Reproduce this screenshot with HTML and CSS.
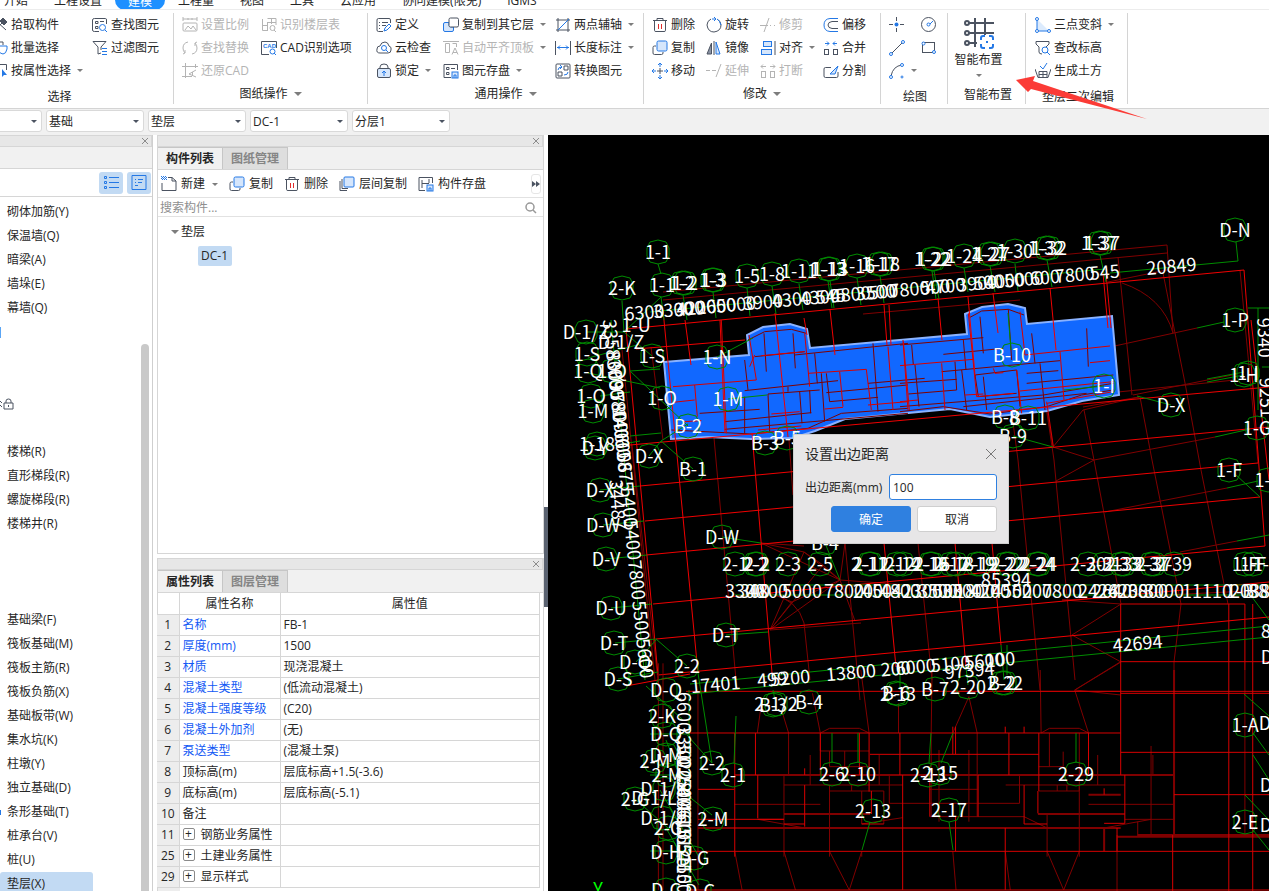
FILE: index.html
```html
<!DOCTYPE html>
<html lang="zh-CN">
<head>
<meta charset="utf-8">
<title>建模</title>
<link rel="stylesheet" href="styles.css">
</head>
<body>
<svg class="defs" aria-hidden="true">
  <symbol id="copy" viewBox="0 0 16 16"><path d="M4 6H2.500Q1 6 1 7.500V13Q1 14.500 2.500 14.500H9.500Q11 14.500 11 13V12"/><rect class="bf" x="5" y="1" width="10" height="10" rx="1.500"/></symbol>
  <symbol id="trash" viewBox="0 0 16 16"><path d="M1 3.500H15M5 3.500V1.500H11V3.500M2.500 4V13.500Q2.500 14.500 4 14.500H12Q13.500 14.500 13.500 13.500V4"/><path class="r" d="M6.500 7V12M9.500 7V12"/></symbol>
</svg>

<nav class="tabs">
  <button>开始</button><button>工程设置</button><button class="on">建模</button><button>工程量</button><button>视图</button><button>工具</button><button>云应用</button><button>协同建模(限免)</button><button>IGMS</button>
</nav>

<header class="ribbon">
  <section class="group g1">
    <div class="cols">
      <button><svg class="i" viewBox="0 0 16 16"><path d="M2 14L12 4M3 3L14 13"/><path class="s" d="M8 4L11 1L15 5L12 8Z"/></svg>拾取构件</button>
      <button><svg class="i" viewBox="0 0 16 16"><path d="M2 6H5V2H11V5"/><path class="b" d="M5 6H15V9Q14 14 11 14Q8 14 6 10Z"/></svg>批量选择</button>
      <button><svg class="i" viewBox="0 0 16 16"><path d="M1 1.500H14.500V7M1 5H8M2 9H6"/><path class="bs" d="M10 6L15 12H12L10 14Z"/></svg>按属性选择<i class="car"></i></button>
      <button><svg class="i" viewBox="0 0 16 16"><path d="M7 14.500H2.500Q.500 14.500 .500 13V3Q.500 1.500 2.500 1.500H13.500Q14.500 1.500 14.500 3V7M3.500 4.500H6V6.500H3.500ZM3.500 9.500H6V11.500H3.500ZM8 4.500H12"/><circle class="b" cx="10.500" cy="10.500" r="3"/><path class="b" d="M13 13L15 15"/></svg>查找图元</button>
      <button><svg class="i" viewBox="0 0 16 16"><path d="M1 1.500H14L9 7V10M1 1.500L6 7V14L9 13"/><path class="b" d="M10 8.500H15M10 11.500H15M10 14.500H15"/></svg>过滤图元</button>
    </div>
    <h2 class="plain">选择</h2>
  </section>
  <section class="group g2">
    <div class="cols">
      <button disabled><svg class="i" viewBox="0 0 16 16"><path d="M1 0V4M15 0V4M1 2H15M6 1V3M10 1V3M2 6H14Q15 6 15 7V13Q15 14 14 14H2Q1 14 1 13V7Q1 6 2 6M3 13L6 9L9 12L11 9L14 13"/></svg>设置比例</button>
      <button disabled><svg class="i" viewBox="0 0 16 16"><path d="M6 2Q1 3 1 8Q1 11 3 13L1 14M3 13V10M10 14Q15 13 15 8Q15 5 13 3L15 2M13 3V6"/></svg>查找替换</button>
      <button disabled><svg class="i" viewBox="0 0 16 16"><path d="M3.500 0V15M0 3.500H16M0 13.500H10M13.500 1V5M14 7L7 11L14 14M10.500 9V12"/></svg>还原CAD</button>
      <button disabled><svg class="i" viewBox="0 0 16 16"><path d="M1.500 2V13.500H6M1.500 8.500H6M6.500 5V14M6.500 1.500H15V8M10.500 1V7M6 5.500H15"/><circle cx="11.500" cy="11" r="2.500"/><path d="M13 13L15 15"/></svg>识别楼层表</button>
      <button><svg class="i" viewBox="0 0 16 16"><path d="M8 14.500H.500V1.500H15.500V8"/><text x="2" y="8" class="mini">CAD</text><circle class="b" cx="11.500" cy="11.500" r="2.500"/><path class="b" d="M13 13L15 15"/></svg>CAD识别选项</button>
    </div>
    <h2>图纸操作<i class="car big"></i></h2>
  </section>
  <section class="group g3">
    <div class="cols">
      <button><svg class="i" viewBox="0 0 16 16"><path d="M7 14.500H2.500Q1 14.500 1 13V3Q1 1.500 2.500 1.500H13Q14.500 1.500 14.500 3V6M3 5.500H4M6 5.500H12M3 8.500H4M6 8.500H10M3 11.500H4"/><path class="b" d="M8 14L9 11L13 7L15 9L11 13Z"/></svg>定义</button>
      <button><svg class="i" viewBox="0 0 16 16"><path d="M4 13Q0 13 1 9Q1 6 4 6Q5 2 9 2Q12 2 13 6Q16 7 15 10Q15 13 12 13Z"/><circle class="b" cx="8" cy="8" r="2.500"/><path class="b" d="M10 10L12 12"/></svg>云检查</button>
      <button><svg class="i" viewBox="0 0 16 16"><path d="M4 6V4Q4 1 8 1Q12 1 12 4V6"/><rect class="lf" x="1.500" y="5.500" width="13" height="9" rx="1.500"/><path class="b" d="M8 13V9M6 10L8 8L10 10"/></svg>锁定<i class="car"></i></button>
      <button><svg class="i" viewBox="0 0 16 16"><path class="bf" d="M6 5.500H2Q.500 5.500 .500 7V13Q.500 14.500 2 14.500H9Q10.500 14.500 10.500 13V10H8Q6 10 6 8Z"/><rect x="6" y="1" width="9.500" height="9" rx="1.500" fill="#fff"/></svg>复制到其它层<i class="car"></i></button>
      <button disabled><svg class="i" viewBox="0 0 16 16"><path d="M0 1.500H16M2.500 3.500H6.500V12.500H2.500ZM9.500 3.500H13.500V7M9 14.500L12 8L15 14.500M10 12.500H14"/></svg>自动平齐顶板<i class="car"></i></button>
      <button><svg class="i" viewBox="0 0 16 16"><path d="M8 14.500H1V1.500H14.500V7M3.500 4.500H6V6.500H3.500ZM3.500 9.500H6V11.500H3.500ZM8 5.500H12"/><rect class="bf" x="9" y="9" width="6" height="6"/><path class="b" d="M11 15V12H13V15"/></svg>图元存盘<i class="car"></i></button>
      <button><svg class="i" viewBox="0 0 16 16"><path d="M3 1V15M13 1V15M1 3H15M1 13H15"/><path class="b" d="M3 13L14 2"/></svg>两点辅轴<i class="car"></i></button>
      <button><svg class="i" viewBox="0 0 16 16"><path d="M.500 1V15M15.500 1V15"/><path class="b" d="M2 7.500H14M5 5.500L3 7.500L5 9.500M11 5.500L13 7.500L11 9.500"/></svg>长度标注<i class="car"></i></button>
      <button><svg class="i" viewBox="0 0 16 16"><rect x="1" y="1" width="14" height="14" rx="1"/><path d="M9 3H13V7H9ZM3 9H7V13H3Z"/><path class="b" d="M3 7Q3 4 7 4M13 9Q13 12 9 12M5 2L7 4L5 6"/></svg>转换图元</button>
    </div>
    <h2>通用操作<i class="car big"></i></h2>
  </section>
  <section class="group g4">
    <div class="cols">
      <button><svg class="i"><use href="#trash"/></svg>删除</button>
      <button><svg class="i"><use href="#copy"/></svg>复制</button>
      <button><svg class="i" viewBox="0 0 16 16"><path d="M5 8H11M8 5V11"/><path class="b" d="M8 0V4M8 12V16M0 8H4M12 8H16M6 2L8 0L10 2M6 14L8 16L10 14M2 6L0 8L2 10M14 6L16 8L14 10"/></svg>移动</button>
      <button><svg class="i" viewBox="0 0 16 16"><path d="M5 2Q1 4 1 8Q2 15 8 15Q15 14 15 8Q15 4 11 2"/><path class="b" d="M6 2H10M8 0L10 2L8 4M11 2Q14 4 15 8"/></svg>旋转</button>
      <button><svg class="i" viewBox="0 0 16 16"><path d="M5.500 3V14H1Z" fill="#8b93a3"/><path d="M8 1V15"/><path class="bf" d="M10 2L14 14H10Z"/></svg>镜像</button>
      <button disabled><svg class="i" viewBox="0 0 16 16"><path d="M0 7.500H4M6 7.500H10M10 14L15 1"/></svg>延伸</button>
      <button disabled><svg class="i" viewBox="0 0 16 16"><path d="M0 8.500H8M10 8.500H11M14 8.500H15M4 15L9 1"/></svg>修剪</button>
      <button><svg class="i" viewBox="0 0 16 16"><path d="M15 1V15"/><rect class="bf" x="3.500" y="1.500" width="8" height="5"/><rect class="bf" x="1.500" y="9.500" width="10" height="5"/></svg>对齐<i class="car"></i></button>
      <button disabled><svg class="i" viewBox="0 0 16 16"><rect x="1.500" y="8.500" width="4" height="6"/><rect x="10.500" y="8.500" width="4" height="6"/><path d="M6 3.500H1M3 1.500L1 3.500L3 5.500M10 3.500H15M13 1.500L15 3.500L13 5.500"/></svg>打断</button>
      <button><svg class="i" viewBox="0 0 16 16"><path class="b" d="M15 1.500H7Q1 2 1 8Q1 14 7 14.500H15"/><path d="M15 4.500H9Q5 5 5 8Q5 11 9 11.500H15"/></svg>偏移</button>
      <button><svg class="i" viewBox="0 0 16 16"><rect x="1.500" y="9.500" width="4" height="5"/><rect x="10.500" y="9.500" width="4" height="5"/><path class="b" d="M2 3.500H6M4 1.500L6 3.500L4 5.500M14 3.500H10M12 1.500L10 3.500L12 5.500"/></svg>合并</button>
      <button><svg class="i" viewBox="0 0 16 16"><path d="M8 4.500H2.500Q1 4.500 1 6V13Q1 14.500 2.500 14.500H13.500Q15 14.500 15 13V9"/><path class="bf" d="M7 11L15 3L12 11Z"/></svg>分割</button>
    </div>
    <h2>修改<i class="car big"></i></h2>
  </section>
  <section class="group g5">
    <div class="cols">
      <button aria-label="点"><svg class="i" viewBox="0 0 16 16"><path d="M0 7.500H4M11 7.500H15M7.500 0V4M7.500 11V15"/><circle class="bs" cx="7.500" cy="7.500" r="2"/></svg></button>
      <button aria-label="直线"><svg class="i" viewBox="0 0 16 16"><path d="M3 13L13 3"/><circle class="bw" cx="2" cy="14" r="1.500"/><circle class="bw" cx="14" cy="2" r="1.500"/></svg></button>
      <button aria-label="弧"><svg class="i" viewBox="0 0 16 16"><path d="M2 13Q4 3 13 2"/><circle class="bw" cx="2" cy="14" r="1.500"/><circle class="bw" cx="13" cy="2" r="1.500"/><circle class="bw" cx="13" cy="14" r="1"/></svg><i class="car"></i></button>
      <button aria-label="圆"><svg class="i" viewBox="0 0 16 16"><circle cx="7.500" cy="7.500" r="7"/><path class="b" d="M8 8L12 4"/><circle class="bw" cx="7.500" cy="7.500" r="1.500"/></svg></button>
      <button aria-label="矩形"><svg class="i" viewBox="0 0 16 16"><rect x="1.500" y="2.500" width="12" height="10"/><circle class="bw" cx="2.500" cy="3.500" r="1.500"/><circle class="bw" cx="13" cy="12" r="1.500"/></svg></button>
    </div>
    <h2 class="plain">绘图</h2>
  </section>
  <section class="group g6">
    <button class="large"><svg viewBox="0 0 32 32"><path d="M5 6H31M5 16H31M5 26H14M12 1V30M22 1V18"/><circle cx="4" cy="6" r="2"/><circle cx="4" cy="16" r="2"/><circle cx="4" cy="26" r="2"/><path class="b" d="M22 19H20Q18 19 18 21V23M26 19H28Q30 19 30 21V23M18 27V29Q18 31 20 31H22M30 27V29Q30 31 28 31H26M23 25H25"/></svg>智能布置<i class="car"></i></button>
    <h2 class="plain">智能布置</h2>
  </section>
  <section class="group g7">
    <div class="cols">
      <button><svg class="i" viewBox="0 0 16 16"><path fill="#dcebfd" stroke="none" d="M2 2L14 14H2Z"/><path class="b" d="M2 2V14H15"/><circle class="bw" cx="2" cy="2" r="1.500"/><circle class="bw" cx="2" cy="14" r="1.500"/><circle class="bw" cx="14" cy="14" r="1.500"/></svg>三点变斜<i class="car"></i></button>
      <button><svg class="i" viewBox="0 0 16 16"><path d="M1 1.500H14V4L11 7M1 1.500V4L4 7V12Q4 14 7 14"/><circle class="b" cx="10" cy="10" r="3"/><path class="b" d="M12 12L15 15"/></svg>查改标高</button>
      <button><svg class="i" viewBox="0 0 16 16"><path d="M0 6L3 14.500H13L16 6M4 8.500H12V14M4 8.500V14M8 8.500V15M4 11.500H12"/><path class="b" d="M5 3L8 6L12 0"/></svg>生成土方</button>
    </div>
    <h2 class="plain">垫层二次编辑</h2>
  </section>
  <svg class="pointer" viewBox="0 0 132 44" aria-hidden="true"><path d="M0 4L19 0L17 5L131 43L15 13L12 16Z"/></svg>
</header>

<div class="filters">
  <label><select aria-label="楼层"><option></option></select></label>
  <label><select aria-label="类别"><option>基础</option></select></label>
  <label><select aria-label="构件类型"><option>垫层</option></select></label>
  <label><select aria-label="构件"><option>DC-1</option></select></label>
  <label><select aria-label="分层"><option>分层1</option></select></label>
</div>

<main>
  <aside class="nav">
    <div class="strip"><button aria-label="关闭"><svg viewBox="0 0 8 8"><path d="M1 1L7 7M7 1L1 7"/></svg></button></div>
    <div class="blank"></div>
    <div class="views">
      <button aria-label="列表"><svg class="i" viewBox="0 0 16 16"><path class="b" d="M6 2.500H16M6 7.500H16M6 12.500H16M1.500 1.500H3.500V3.500H1.500ZM1.500 6.500H3.500V8.500H1.500ZM1.500 11.500H3.500V13.500H1.500Z"/></svg></button>
      <button aria-label="详情"><svg class="i" viewBox="0 0 16 16"><path class="b" d="M1 .500H15V14.500H1ZM4 4.500H5M7 4.500H12M4 7.500H5M7 7.500H11M4 10.500H7"/></svg></button>
    </div>
    <ul>
      <li>砌体加筋(Y)</li><li>保温墙(Q)</li><li>暗梁(A)</li><li>墙垛(E)</li><li>幕墙(Q)</li><li class="mark"></li><li></li><li></li>
      <li class="lock"><svg viewBox="0 0 14 12"><path d="M0 3L2 5M0 7L2 9M4 5H13V11H4ZM6 5V3Q6 1 8.500 1Q11 1 11 3V5M8.500 7V9"/></svg></li><li></li>
      <li>楼梯(R)</li><li>直形梯段(R)</li><li>螺旋梯段(R)</li><li>楼梯井(R)</li><li></li><li></li><li></li>
      <li>基础梁(F)</li><li>筏板基础(M)</li><li>筏板主筋(R)</li><li>筏板负筋(X)</li><li>基础板带(W)</li><li>集水坑(K)</li><li>柱墩(Y)</li><li>独立基础(D)</li><li class="dot">条形基础(T)</li><li>桩承台(V)</li><li>桩(U)</li><li class="on">垫层(X)</li>
    </ul>
    <div class="thumb"></div>
  </aside>

  <div class="mid">
    <section class="panel comps">
      <div class="strip"><button aria-label="关闭"><svg viewBox="0 0 8 8"><path d="M1 1L7 7M7 1L1 7"/></svg></button></div>
      <div class="ptabs"><button class="on">构件列表</button><button>图纸管理</button></div>
      <div class="tools">
        <button><svg class="i" viewBox="0 0 16 16"><path d="M7 1.500H11L15 5V14.500H1V7M11 1.500V5H15"/><path class="b" stroke-dasharray="1 1" d="M0 .500H5M1 1.500H6M0 2.500H5M1 3.500H6"/></svg>新建<i class="car"></i></button>
        <button><svg class="i"><use href="#copy"/></svg>复制</button>
        <button><svg class="i"><use href="#trash"/></svg>删除</button>
        <button><svg class="i" viewBox="0 0 16 16"><path d="M1 5V14.500H8M3 3V12.500H9"/><rect class="bf" x="5" y="1" width="10" height="10" rx="1"/></svg>层间复制</button>
        <button><svg class="i" viewBox="0 0 16 16"><path d="M7 14.500H1V1.500H14.500V7M4 4V12M4 7.500H11M11 3V7"/><rect class="bf" x="9" y="9" width="6" height="6"/><path class="b" d="M11 15V12H13V15"/></svg>构件存盘</button>
        <button class="more" aria-label="更多"><svg viewBox="0 0 8 6"><path d="M0 0L4 3L0 6ZM4 0L8 3L4 6Z"/></svg></button>
      </div>
      <label class="search"><input type="text" placeholder="搜索构件..." aria-label="搜索构件"><svg viewBox="0 0 12 12"><circle cx="5" cy="5" r="4"/><path d="M8 8L11 11"/></svg></label>
      <div class="tree">
        <p><i class="car big"></i>垫层</p>
        <p class="leaf"><span>DC-1</span></p>
      </div>
    </section>
    <section class="panel props">
      <div class="strip"><button aria-label="关闭"><svg viewBox="0 0 8 8"><path d="M1 1L7 7M7 1L1 7"/></svg></button></div>
      <div class="ptabs"><button class="on">属性列表</button><button>图层管理</button></div>
      <table>
        <thead><tr><th></th><th>属性名称</th><th>属性值</th></tr></thead>
        <tbody>
          <tr><th>1</th><td class="key">名称</td><td>FB-1</td></tr>
          <tr><th>2</th><td class="key">厚度(mm)</td><td>1500</td></tr>
          <tr><th>3</th><td class="key">材质</td><td>现浇混凝土</td></tr>
          <tr><th>4</th><td class="key">混凝土类型</td><td>(低流动混凝土)</td></tr>
          <tr><th>5</th><td class="key">混凝土强度等级</td><td>(C20)</td></tr>
          <tr><th>6</th><td class="key">混凝土外加剂</td><td>(无)</td></tr>
          <tr><th>7</th><td class="key">泵送类型</td><td>(混凝土泵)</td></tr>
          <tr><th>8</th><td>顶标高(m)</td><td>层底标高+1.5(-3.6)</td></tr>
          <tr><th>9</th><td>底标高(m)</td><td>层底标高(-5.1)</td></tr>
          <tr><th>10</th><td>备注</td><td></td></tr>
          <tr><th>11</th><td><button class="plus" aria-label="展开">+</button>钢筋业务属性</td><td></td></tr>
          <tr><th>25</th><td><button class="plus" aria-label="展开">+</button>土建业务属性</td><td></td></tr>
          <tr><th>29</th><td><button class="plus" aria-label="展开">+</button>显示样式</td><td></td></tr>
        </tbody>
      </table>
      <div class="tail"></div>
    </section>
  </div>

  <div class="splitter"><button aria-label="折叠"></button></div>

  <section class="canvas">
    <svg class="plan" viewBox="548 135 721 756" preserveAspectRatio="xMinYMin slice">
      <!-- dark axes -->
      <g class="dark">
        <path d="M663 292L1167 245L1173 333M663 300L1167 253M651 347L663 440M622 350L655 680M632 445L659 690M714 438L736 680M789 440L793 495M845 543L860 700M918 543L932 680M1010 400L1018 460L1040 690M1045 400L1054 460L1075 680M1140 397L1152 460L1181 604L1174 662V776M1084 410L1094 460L1121 604M1118 257L1132 395M1163 273L1185 383L1201 470L1228 604M1240 270L1258 463M863 314L1020 300M1122 283Q1163 297 1173 333M1108 282L1167 270M1110 347L1197 328M1133 395L1237 374M1118 392L1235 380M1083 407L1139 397M1053 447L1083 410L1139 397M1053 447L1094 460L1215 437M1094 460L1056 481M1105 512L1227 488M1180 552L1237 541M1047 411L1053 447"/>
        <path d="M761 543L804 552L840 580L855 621M770 630L804 552M770 630L823 565L804 552M770 630L840 580L823 565M770 630L792 602L840 580M770 630L861 623M770 593Q798 600 804 623L810 680M761 543L840 580M840 580L845 543M761 543L804 546M840 580L908 585M792 602L770 593"/>
        <path d="M1121 604L1072 635L1121 662M1121 604L1062 600M1121 662L1075 690M1062 600L1269 590"/>
      </g>
      <!-- selected raft slab -->
      <path class="slab" d="M664 362L749 355L747 335L763 327L790 324L807 329L810 348L967 334L965 314L982 307L1008 304L1025 308L1027 324L1112 316L1119 395L1082 401L1047 411L990 417L950 409L845 419L815 431L793 438L751 439L708 437L671 439Z"/>
      <g class="dark" transform="translate(548 210) scale(.33333)" stroke-width="3">
        <path d="M600 390L650 365L730 358L775 370M648 370L655 485M735 370L742 475M590 450L600 540M620 440L770 425M740 435L980 410L1080 400M800 430L808 520M975 400L990 605M590 542L870 512M590 560V670M660 552L815 540M720 530V545M755 545L762 640M785 540L788 610M530 635L790 608M530 658L1080 610M455 610L635 598M820 490L830 635M835 490L845 575L990 562M835 548L1080 525M960 520L1130 505M370 660L610 672L780 655L880 610L1080 595M660 552L665 665"/>
      </g>
      <g class="dark" transform="translate(900 210) scale(.33333)" stroke-width="3">
        <path d="M210 322L245 303L325 298L372 315M240 320L250 430M325 298L335 450M0 405L250 383M35 405L40 465M190 390L198 480M130 433L310 415M45 465L57 590M125 485L480 452M165 455L170 540L25 552M185 480L200 600M0 520L170 508M250 500L260 600M225 495L350 480L360 590M225 495L235 560L350 550M395 370L405 460M380 490L475 482M380 520L640 495M420 460L435 600M560 355L565 470M0 590L430 555L640 520M0 605L130 590L270 612L440 590L545 555L640 540M190 590L560 550"/>
      </g>
      <!-- main axes -->
      <g class="red">
        <path d="M626 329L1244 270L1265 546M636 349L745 340M630 445L1269 387M640 486L1269 427M645 521L1258 463M646 555L1260 497M653 604L1265 546M656 639L1269 582M658 675L1269 617M626 329L658 675M663 310L698 673M685 320L691 365M720 320L725 433M752 433L772 673M775 313L788 437M804 318L807 335M830 310L835 355M884 305L887 345M889 305L891 345M938 298L942 340M968 297L975 375M993 293L998 333M1050 288L1056 350M1103 273L1108 328M1106 273L1111 328M884 543L896 667M955 543L966 667M992 543L1001 645M1251 320L1269 480M626 686L690 674"/>
      </g>
      <g class="mid-red" transform="translate(548 210) scale(.33333)">
        <path d="M375 530L625 510L603 375M375 577L440 570M440 525L448 620M520 330L535 670M640 437L770 425M605 470L620 435M670 612L755 605M780 490L955 478L970 600M875 485L885 590M830 597L885 592M1020 410L1035 600M1065 390L1080 600M960 585L1080 575M630 660L760 648M770 370L785 530M410 635L460 632"/>
      </g>
      <g class="mid-red" transform="translate(900 210) scale(.33333)">
        <path d="M0 467L220 448M205 310L230 560L340 550M360 305L375 435L630 408M480 425L492 570M360 543L640 515M570 458L630 452M195 555L250 552M0 575L55 570M10 395L28 600M125 460L135 600M440 580L640 545M350 480L365 610M280 475L285 490L310 488M440 575L460 710"/>
      </g>
      <!-- lower block; drawn in its own wider grid -->
      <g class="lower dark" transform="translate(548 670) scale(.46 .33333)">
        <path d="M240 -20V660M250 -20V660M326 70V660M463 110L455 189M510 130L523 189V315M575 70L592 189L612 175H677L698 189L680 0M762 100V189M835 0L833 189V440M915 80L880 189M915 80L933 189V440M1070 0L1072 189L1090 175H1155L1175 189L1145 60L1245 75M1145 60L1245 -25M592 189V243H698M612 243V290H698M645 243V290M570 255V345M720 255V345M742 315V400H1025V315M771 443L682 462M513 345H771M995 345H1254M513 315V560M612 345V560M1155 345V560M1085 430V560M405 403H592M612 363H730V462M682 363V462M830 358H935M830 440H1035L1085 474M456 448L558 474M1209 474L1311 448M406 544L422 660M513 544L538 660M612 544L655 660L682 544V560M880 544L887 660M994 544L1005 660M1085 544L1121 660L1155 544M1120 245V290H1067M1175 403H1361M660 345V363M1107 345V363M1128 345V363M850 240V455M915 240V455M1090 189V290M1155 189V363H1067M1195 255V345M1254 448H1361M1282 455V500M1311 228V495M1315 255V315M1361 60V495M880 64H1245M1237 495V663M1515 0V495"/>
        <path class="thick" d="M405 315H1361M326 474H1245M1237 500H1568M1282 495H1568M513 432H700M1065 432H1254M1175 374H1245M1209 474V544M1361 0V495"/>
      </g>
      <g class="lower mid-red" transform="translate(548 670) scale(.46 .33333)">
        <path d="M300 64H1568M1245 70H1568M300 189H1245M1245 247H1568M700 253H1067M326 358H405M326 448H513M300 544H1568M300 660H1568M406 189V560M451 189V315M456 315V445M592 189V315M677 189V315M698 189V365M765 189V315M880 170V253M886 170V253M886 440V544M994 170V189M1035 170V189M1002 189V315M1067 189V363M1175 189V315M1245 -198V315M1245 -198H1515V0M1480 -198V663M1532 -198V663M1245 -25H1568M1361 374H1568M558 345V470M558 295V315M703 363V432M771 315V660M830 315V440M935 315V440M994 474V660M1035 345V462H1085M1065 363V430M1254 315V460H1209M682 462H730M513 462H558M1358 495V663M1237 474V544M456 448H513M1209 355V374"/>
      </g>
      <!-- leaders -->
      <g class="green">
        <path d="M658 264L661 274M661 297L664 320M683 295L687 320M713 292L716 318M747 288L750 316M772 286L776 314M799 284L803 310M828 281L832 308M830 281L834 308M857 278L861 305M880 276L884 303M932 271L936 299M934 271L939 299M964 268L968 292M990 266L995 292M1015 264L1018 291M1047 260L1052 287M1100 255L1106 282M1110 273L1238 261L1236 242M650 312L1105 269M622 301L624 332M661 297L624 332L652 356M637 345L588 358M624 332L587 332M660 388L588 373M630 371L660 369M630 371L688 426M649 456L661 441L688 424M661 441L693 469M630 436L661 433M600 396L630 392M600 448L640 441M717 357L753 338M728 399L767 395M1011 350L1008 313M1104 386L1064 390M1171 405L1137 396M1053 447L1013 436M1197 328L1224 322M1207 382L1244 375M1207 379L1244 372M1248 308H1269M1258 308V410M1262 367H1269M1215 437L1250 429M1236 475L1260 497M1227 488L1258 481M1237 541L1269 535M600 490L640 486M603 525L644 521M606 559L647 555M611 608L652 604M615 643L656 639L687 666M722 537L761 543M726 635L768 632M825 543L840 580M611 320L645 680M618 679L658 672M636 662L656 640M735 585H1269M735 595H1269M690 684L1269 626M690 694L1269 637M1252 597L1269 620M698 673L712 763M646 686L683 720M775 700L773 690M1007 645V675M900 670V690M1001 645L1004 680M966 667L968 685"/>
        <path d="M832 733V763M858 733V763M931 733L929 763M953 733L941 763M1076 733V763M736 716L734 763M870 822L862 850M949 822L953 850M1244 694L1269 716M1253 733L1269 755M1253 755L1269 780M1245 795L1269 820M1253 830L1269 850M687 735L712 763M687 795L712 815M660 790L699 857M635 799L668 828M666 740L690 800M689 690V891M666 828L699 885M650 734H690M650 775H690M650 851H690"/>
      </g>
      <g class="green" id="bubbles"></g>
      <g class="lab" id="names"></g>
      <g class="lab" id="dims"></g>
      <text class="lab axis" x="598" y="896">Y</text>
    </svg>

    <form class="dialog" role="dialog" aria-labelledby="dt">
      <div class="dhead"><h3 id="dt">设置出边距离</h3><button type="button" aria-label="关闭"><svg viewBox="0 0 12 12"><path d="M1 1L11 11M11 1L1 11"/></svg></button></div>
      <div class="field"><label for="dist">出边距离(mm)</label><input id="dist" type="text" value="100"></div>
      <div class="acts"><button type="button" class="ok">确定</button><button type="button">取消</button></div>
    </form>
  </section>
</main>
<script src="plan.js"></script>
</body>
</html>
```
FILE: plan.js
```js
// Axis names as "x y name"; a leading "~" marks a name without a bubble.
const names = `1235 230 D-N;658 252 1-1;622 288 2-K;662 285 1-1;682 283 1-2;685 283 1-2;712 280 1-3;714 280 1-3;747 276 1-5;772 274 1-8;799 271 1-11;828 269 1-13;830 269 1-13;857 266 1-16;879 264 1-17;882 264 1-18;932 259 1-22;934 259 1-22;964 256 1-24;989 254 1-27;992 254 1-27;1015 251 1-30;1046 248 1-32;1049 248 1-32;1099 243 1-37;1102 243 1-37;
586 332 D-1/Z;~636 325 1-U;~621 342 D-1/Z;587 354 1-S;652 356 1-S;588 371 1-Q;612 371 1-Q;591 396 1-O;593 411 1-M;717 357 1-N;728 399 1-M;662 398 1-O;688 426 B-2;765 443 B-3;787 438 B-5;1012 355 B-10;1104 386 1-I;1005 417 B-8;1028 418 B-11;1013 436 B-9;1171 405 D-X;1235 320 1-P;1244 375 1-H;1248 373 1-I;1257 428 1-G;1229 470 1-F;1268 480 1-E;
649 456 D-X;595 448 D-Y;597 444 1-18;693 469 B-1;600 490 D-X;603 525 D-W;722 537 D-W;606 559 D-V;611 608 D-U;614 643 D-T;726 635 D-T;635 662 D-Q;618 679 D-S;687 666 2-2;825 543 B-4;
735 564 2-1;755 564 2-2;757 564 2-2;788 564 2-3;820 564 2-5;869 564 2-11;871 564 2-11;897 564 2-12;903 564 2-14;930 564 2-16;932 564 2-16;951 564 2-17;956 564 2-18;977 564 2-19;980 564 2-19;1006 564 2-22;1009 564 2-22;1037 564 2-24;1039 564 2-24;1088 564 2-30;1104 564 2-31;1121 564 2-33;1124 564 2-33;1151 564 2-37;1154 564 2-37;1174 564 2-39;1245 564 1-F;1253 564 1-F;~1267 564 1-D;
666 690 D-Q;662 716 2-K;666 734 D-Q;666 755 D-M;655 761 2-M;667 775 2-M;664 789 D-1/K;635 799 2-G;~654 798 D-1/L;662 818 D-1/J;668 828 2-G;666 852 D-H;694 858 D-G;666 890 D-C;700 891 D-C;712 763 2-2;733 775 2-1;713 819 2-M;776 704 2-1/2;773 705 B-3;809 702 B-4;898 694 2-13;896 693 B-6;935 689 B-7;968 687 2-20;1005 683 2-22;1002 683 B-2;832 774 2-6;858 774 2-10;928 775 2-13;940 773 2-15;1076 774 2-29;873 811 2-13;949 810 2-17;1245 725 1-A;1245 822 2-E;~1265 723 D;~1266 785 D;~1266 825 D;~1266 631 8;~1267 657 D`;

// Runs of dimensions: origin, angle, then "offset value" pairs along the run.
const runs = [
  [645, 319, -5, "0 6300,29 3300,45 300,52 4200,72 2600,92 5000,119 3900,148 4300,176 4300,187 545,207 4800,232 3500,240 500,266 7800,292 500,302 4700,334 3900,345 500,362 4000,381 5000,402 600,432 7800,462 545,529 20849"],
  [603, 322, 84, "18 3358,50 8009,58 3000,80 3580,92 7800,108 1400,118 4060,132 6006,151 5875,187 5400,220 5400,260 7800,301 5500,339 5600"],
  [611, 505, 86, "0 34487"],
  [677, 712, 90, "0 6600,33 3350,48 3020,66 0250,80 2804,95 4061,108 0610,122 6065,136 5125,152 5150,172 1500"],
  [1258, 338, 88, "0 9340,60 9251"],
  [0, 598, 0, "745 3300,755 300,768 4800,802 5000,844 7800,868 200,882 4504,900 4800,922 2300,938 3500,948 500,962 3300,975 1800,990 4200,1012 4500,1032 5200,1062 7800,1098 2426,1112 2640,1128 4200,1148 3800,1164 3000,1207 11110,1240 1-B,1250 2038,1268 8885"],
  [1006, 587, 0, "0 85394"],
  [716, 691, -5, "0 17401,57 499,75 5200,136 13800,181 200,201 6000,236 5100,270 5600,286 100"],
  [970, 677, -5, "0 97394"],
  [1138, 650, -5, "0 42694"]
];

const ns = "http://www.w3.org/2000/svg";
function add(parent, tag, attrs, text) {
  const el = document.createElementNS(ns, tag);
  for (const k in attrs) el.setAttribute(k, attrs[k]);
  if (text) el.textContent = text;
  parent.appendChild(el);
  return el;
}

const bubbles = document.getElementById("bubbles");
const labels = document.getElementById("names");
const dims = document.getElementById("dims");

for (const item of names.split(";")) {
  const [x, y, name] = item.trim().replace("~", "").split(" ");
  if (!item.trim().startsWith("~")) {
    add(bubbles, "path", { d: `M${x} ${y}m0-12l8 2l3 6v8l-3 6l-8 2l-8-2l-3-6v-8l3-6z` });
  }
  add(labels, "text", { x, y: +y + 7 }, name);
}

for (const [x, y, angle, items] of runs) {
  const run = add(dims, "g", { transform: `translate(${x} ${y}) rotate(${angle})` });
  for (const pair of items.split(",")) {
    const [offset, value] = pair.split(" ");
    add(run, "text", { x: offset }, value);
  }
}
```
FILE: styles.css
```css
* { box-sizing: border-box; }
body {
  margin: 0; height: 100vh; overflow: hidden;
  display: flex; flex-direction: column;
  font: 12px/18px "Open Sans", "Noto Sans CJK SC", sans-serif;
  color: #262626; background: #fff;
}
button, input, select { font: inherit; color: inherit; border: 0; background: none; padding: 0; margin: 0; border-radius: 0; }
button { white-space: nowrap; }
h2, h3, p, ul { margin: 0; padding: 0; font: inherit; list-style: none; }
.defs { position: absolute; width: 0; height: 0; }

.i { width: 16px; height: 16px; flex: none; fill: none; stroke: #4b5361; }
.b { stroke: #2478e5; }
.r { stroke: #e02c2c; }
.s { fill: #4b5361; }
.bf { stroke: #2478e5; fill: #d6e6fb; }
.lf { fill: #d6e6fb; }
.bs { stroke: none; fill: #2478e5; }
.bw { stroke: #2478e5; fill: #fff; }
.mini { font: bold 6px "Liberation Sans", sans-serif; fill: #2478e5; stroke: none; }
.car { flex: none; border: 3px solid transparent; border-top-color: #7d7d7d; border-bottom: 0; margin-left: 3px; }
.car.big { border-width: 4px; border-bottom: 0; margin-left: 6px; }

.tabs { height: 10px; flex: none; display: flex; align-items: flex-end; margin-left: -9px; overflow: hidden; border-bottom: 1px solid #ececec; }
.tabs button { flex: none; height: 20px; padding: 3px 13px 0; line-height: 17px; }
.tabs .on { background: #1e90ff; color: #fff; border-radius: 10px; margin-bottom: -1px; }

.ribbon { position: relative; flex: none; display: flex; height: 99px; padding: 3px 0 4px; border-bottom: 1px solid #d4d4d4; }
.group { display: flex; flex-direction: column; border-right: 1px solid #d4d4d4; flex: none; }
.cols { display: grid; grid-auto-flow: column; grid-template-rows: repeat(3, 23px); justify-content: start; }
.cols button { display: flex; align-items: center; gap: 3px; }
.cols button:disabled { color: #b4b4b4; }
.cols button:disabled .i { stroke: #b4b4b4; }
.group h2 { flex: 1; display: flex; align-items: center; justify-content: center; padding-top: 2px; }
.group h2.plain { padding-top: 6px; }
.g1 { width: 174px; }
.g1 .cols { grid-template-columns: 100px auto; margin-left: -8px; }
.group.g1 h2 { padding-right: 54px; }
.g2 { width: 194px; padding-left: 8px; }
.g2 .cols { grid-template-columns: 79px auto; }
.g2 h2 { padding-right: 8px; }
.g3 { width: 276px; padding-left: 8px; }
.g3 .cols { grid-template-columns: 67px 112px auto; }
.g3 h2 { padding-right: 8px; }
.g4 { width: 237px; padding-left: 8px; }
.g4 .cols { grid-template-columns: 54px 54px 63px auto; }
.g4 h2 { padding-right: 8px; }
.g5 { width: 67px; padding-left: 8px; }
.g5 .cols { grid-template-columns: 32px auto; }
.g5 h2 { padding-right: 6px; }
.g6 { width: 78px; }
.g7 { width: 102px; padding-left: 9px; }
.g7 h2 { padding-right: 6px; }
.large { display: flex; flex-direction: column; align-items: center; height: 69px; padding: 4px 16px 0 0; }
.large svg { width: 32px; height: 32px; flex: none; fill: none; stroke: #4b5361; stroke-width: 2; margin-bottom: 2px; }
.large .car { margin: 5px 0 0; }
.g6 h2 { padding-left: 3px; }
.pointer { position: absolute; left: 1016px; top: 66px; width: 132px; height: 44px; fill: #fb3b36; }

.filters { flex: none; display: flex; gap: 4px; height: 26px; padding: 1px 0 3px; margin-left: -56px; background: #f1f1f1; }
.filters label { position: relative; flex: none; width: 98px; }
.filters select { appearance: none; width: 100%; height: 22px; padding: 1px 2px 0; background: #fff; border: 1px solid #d9d9d9; border-radius: 3px; }
.filters label::after { content: ""; position: absolute; right: 5px; top: 10px; border: 3px solid transparent; border-top-color: #4b5361; border-bottom: 0; }

main { flex: 1; min-height: 0; display: flex; }
.strip { flex: none; height: 12px; background: #e7e7e7; border: 1px solid #d6d6d6; border-left: 0; display: flex; justify-content: flex-end; align-items: center; padding-right: 2px; }
.strip button { display: flex; }
.strip svg { width: 8px; height: 8px; fill: none; stroke: #8c8c8c; }

.nav { position: relative; flex: none; width: 153px; border-right: 1px solid #cfcfcf; overflow: hidden; }
.blank { height: 22px; background: #f1f1f1; border-bottom: 1px solid #d6d6d6; }
.views { height: 28px; display: flex; justify-content: flex-end; align-items: center; gap: 4px; padding-right: 1px; border-bottom: 1px solid #d6d6d6; }
.views button { width: 24px; height: 22px; background: #c2daf3; border-radius: 3px; display: flex; align-items: center; justify-content: center; }
.nav ul { padding-top: 3px; }
.nav li { height: 24px; line-height: 24px; padding-left: 7px; width: 93px; }
.nav .on { background: #c2daf3; border-radius: 3px; }
.nav .mark { background: linear-gradient(#5aa5f5, #5aa5f5) 0 7px / 1px 11px no-repeat; }
.nav .dot { background: linear-gradient(#2478e5, #2478e5) 0 10px / 1px 5px no-repeat; }
.nav .lock { padding: 6px 0 0; line-height: 0; }
.lock svg { width: 14px; height: 12px; fill: none; stroke: #4b5361; }
.thumb { position: absolute; right: 3px; top: 209px; bottom: 0; width: 8px; border-radius: 4px 4px 0 0; background: #c9c9c9; }

.mid { flex: none; width: 387px; margin-left: 4px; display: flex; flex-direction: column; gap: 4px; }
.panel { display: flex; flex-direction: column; border: 1px solid #d6d6d6; border-top: 0; min-height: 0; }
.comps { flex: 419; }
.props { flex: 333; border-bottom: 0; }
.ptabs { flex: none; height: 23px; display: flex; background: #f1f1f1; border-bottom: 1px solid #d6d6d6; }
.ptabs button { width: 65px; font-weight: 600; color: #858585; background: #dedede; border: 1px solid #c6c6c6; border-left: 0; border-bottom: 0; }
.ptabs .on { color: #262626; background: #f1f1f1; font-weight: 700; }
.tools { flex: none; height: 28px; display: flex; align-items: center; padding: 1px 2px 0 3px; gap: 11px; border-bottom: 1px solid #e2e2e2; }
.tools button { display: flex; align-items: center; gap: 4px; }
.tools .more { margin-left: auto; width: 10px; height: 20px; border: 1px solid #e6e6e6; border-radius: 3px; justify-content: center; }
.more svg { width: 8px; height: 6px; flex: none; fill: #4b5361; }
.search { flex: none; height: 19px; display: flex; align-items: center; border-bottom: 1px solid #e2e2e2; padding: 1px 6px 0 0; }
.search input { flex: 1; padding-left: 2px; outline: 0; height: 18px; }
.search input::placeholder { color: #8f8f8f; opacity: 1; }
.search svg { width: 12px; height: 12px; fill: none; stroke: #999; stroke-width: 1.5; }
.tree { padding: 3px 0 0 7px; }
.tree p { height: 24px; display: flex; align-items: center; gap: 2px; }
.tree .leaf { padding-left: 33px; }
.leaf span { background: #c2daf3; border-radius: 2px; padding: 1px 4px 1px 3px; }

table { border-collapse: collapse; width: 383px; flex: none; table-layout: fixed; margin-left: -1px; }
tr { height: 21px; }
th, td { padding: 0 0 0 3px; border: 1px solid #d6d6d6; border-top: 0; font-weight: 400; text-align: left; white-space: nowrap; line-height: 20px; height: 21px; }
thead th { text-align: center; padding: 0; }
th:first-child { width: 22px; border-left: 0; }
th:nth-child(2) { width: 101px; }
tbody th { background: #ededed; text-align: center; padding: 0; }
.key { color: #1259f5; }
.plus { width: 12px; height: 12px; border: 1px solid #8a8a8a; border-radius: 2px; line-height: 8px; margin-right: 6px; vertical-align: 1px; }
.tail { width: 22px; flex: 1; background: #ededed; }

.splitter { flex: none; width: 4px; display: flex; flex-direction: column; }
.splitter button { margin-top: 372px; height: 100px; background: #5a6270; }

.canvas { position: relative; flex: 1; min-width: 0; background: #000; overflow: hidden; }
.plan { display: block; width: 100%; height: 100%; fill: none; }
.dark { stroke: #800000; }
.red { stroke: #f00000; }
.mid-red { stroke: #d80000; stroke-width: 3; }
.lower, .lower path { stroke-width: 1; vector-effect: non-scaling-stroke; }
.lower .thick { stroke-width: 2; }
.green { stroke: #008c00; }
.slab { fill: #1168ff; stroke: #8ab2ff; stroke-width: 2; }
.lab { font: 18px "Noto Sans CJK SC", sans-serif; fill: #fff; text-anchor: middle; }
.axis { fill: #00ff00; }

.dialog { position: absolute; left: 245px; top: 299px; width: 216px; padding: 9px 11px 11px; background: #e7e6e7; border: 1px solid #cfcfcf; }
.dhead { display: flex; justify-content: space-between; align-items: center; height: 20px; }
.dhead h3 { font-size: 14px; }
.dhead button { display: flex; }
.dhead svg { width: 12px; height: 12px; fill: none; stroke: #777; }
.field { display: flex; align-items: center; justify-content: space-between; margin-top: 10px; }
.field label { white-space: nowrap; padding-top: 1px; }
.field input { width: 108px; height: 26px; background: #fff; border: 1px solid #2f80e0; border-radius: 3px; padding: 0 3px; outline: 0; }
.acts { display: flex; justify-content: flex-end; gap: 6px; margin-top: 6px; }
.acts button { width: 80px; height: 26px; padding-top: 1px; background: #fff; border: 1px solid #cfcfcf; border-radius: 3px; }
.acts .ok { background: #2f80e0; border-color: #2f80e0; color: #fff; }
```
